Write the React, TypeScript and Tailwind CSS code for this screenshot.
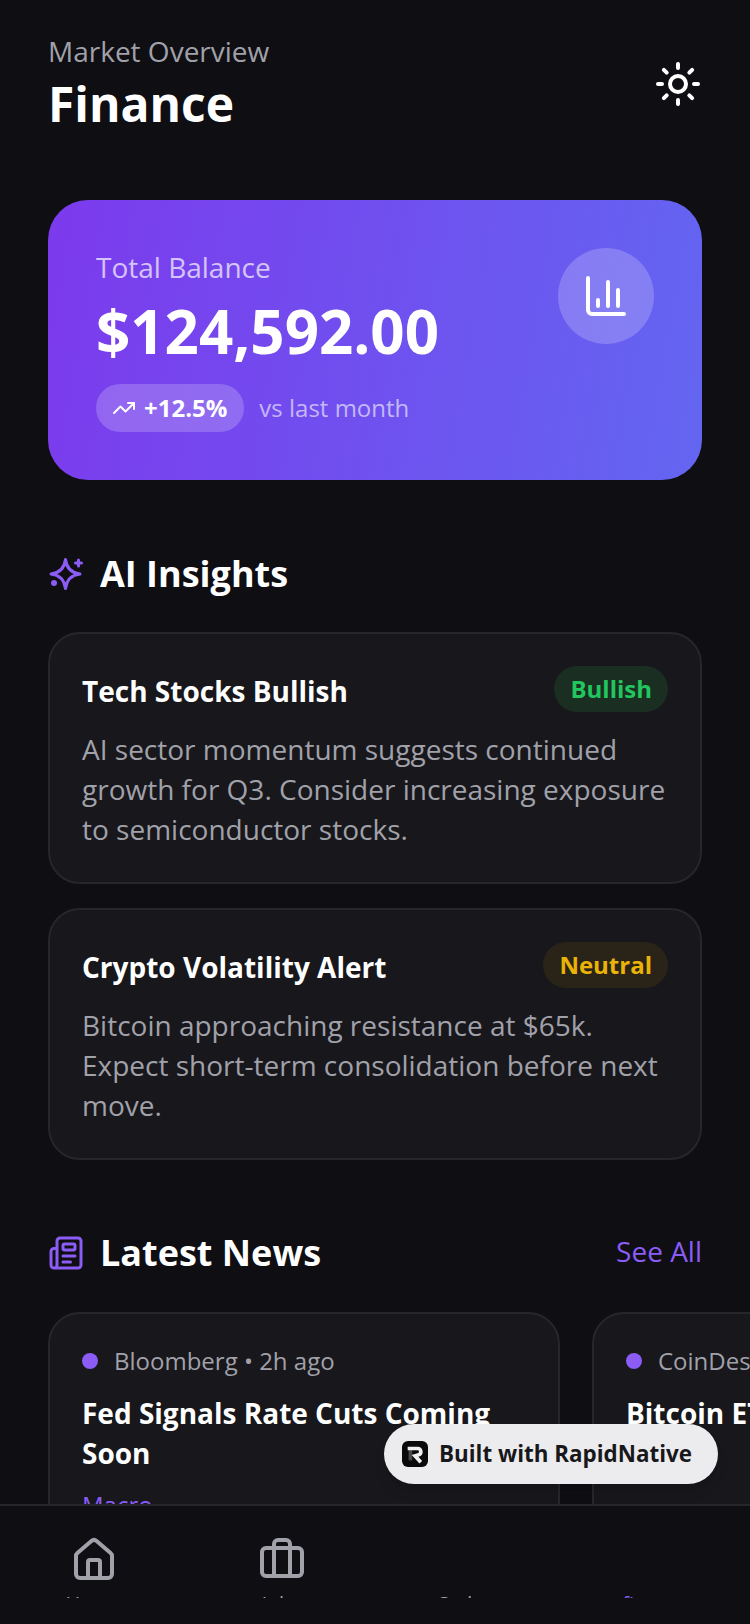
import { BarChart3, Briefcase, House, Newspaper, Sun, TrendingUp } from 'lucide-react';

const insights = [
  {
    title: 'Tech Stocks Bullish',
    body: 'AI sector momentum suggests continued growth for Q3. Consider increasing exposure to semiconductor stocks.',
    tag: 'Bullish',
    tagClass: 'bg-[#1a2e22] text-[#22c55e]',
  },
  {
    title: 'Crypto Volatility Alert',
    body: 'Bitcoin approaching resistance at $65k. Expect short-term consolidation before next move.',
    tag: 'Neutral',
    tagClass: 'bg-[#2a2418] text-[#eab308]',
  },
];

function InsightCard({ title, body, tag, tagClass }: (typeof insights)[number]) {
  return (
    <div className="rounded-[32px] border-2 border-[#27272a] bg-[#17171c] px-8 pt-8 pb-[33px]">
      <div className="flex items-start justify-between">
        <h3 className="mt-[6px] text-[28px] leading-[38px] font-bold text-white">{title}</h3>
        <span className={`rounded-full px-4 py-2 text-[24px] leading-[30px] font-bold ${tagClass}`}>{tag}</span>
      </div>
      <p className="mt-[17px] text-[28px] leading-[40px] text-[#a1a1aa]">{body}</p>
    </div>
  );
}

function NewsCard({ meta, title, tag }: { meta: string; title: string; tag: string }) {
  return (
    <div className="w-[512px] shrink-0 rounded-[32px] border-2 border-[#27272a] bg-[#17171c] px-8 pt-[31px] pb-8">
      <div className="flex items-center gap-4">
        <span className="size-4 rounded-full bg-[#8b5cf6]" />
        <span className="text-[24px] leading-[32px] text-[#a1a1aa] whitespace-nowrap">{meta}</span>
      </div>
      <h3 className="mt-4 text-[28px] leading-[40px] font-bold text-white">{title}</h3>
      <p className="mt-4 text-[24px] leading-[32px] text-[#8b5cf6]">{tag}</p>
    </div>
  );
}

function NavItem({ label, active, children }: { label: string; active?: boolean; children?: React.ReactNode }) {
  return (
    <div className="flex flex-1 flex-col items-center">
      <div className="h-[48px]">{children}</div>
      <div className="mt-[10px] h-[4px] overflow-hidden">
        <span className={`block text-[20px] leading-[20px] ${active ? 'text-[#8b5cf6]' : 'text-[#a1a1aa]'}`}>{label}</span>
      </div>
    </div>
  );
}

function SparkIcon() {
  return (
    <svg viewBox="0 0 36 36" className="size-9 text-[#8b5cf6]" fill="none" stroke="currentColor" strokeWidth="3" strokeLinecap="round" strokeLinejoin="round">
      <path d="M17.5 3.5C18.6 12.4 23.1 16.9 32 18 23.1 19.1 18.6 23.6 17.5 32.5 16.4 23.6 11.9 19.1 3 18 11.9 16.9 16.4 12.4 17.5 3.5Z" />
      <path d="M30.5 4v6M27.5 7h6" />
      <circle cx="6" cy="27" r="1.5" fill="currentColor" />
    </svg>
  );
}

export default function App() {
  return (
    <div className="relative flex h-[1624px] w-[750px] flex-col overflow-hidden bg-[#0e0e13] font-['Open_Sans',sans-serif]">
      <div className="min-h-0 flex-1 overflow-hidden px-12 pt-[31px]">
        <header className="flex items-center justify-between">
          <div>
            <p className="text-[28px] leading-[40px] text-[#a1a1aa]">Market Overview</p>
            <h1 className="mt-px text-[48px] leading-[64px] font-bold text-white">Finance</h1>
          </div>
          <Sun size={48} strokeWidth={2} className="text-white" />
        </header>

        <section className="mt-[64px] flex h-[280px] items-start justify-between rounded-[40px] bg-[linear-gradient(100deg,#7c3aed,#6366f1)] px-12 pt-[47px]">
          <div>
            <p className="text-[28px] leading-[40px] text-white/70">Total Balance</p>
            <p className="mt-2 text-[60px] leading-[72px] font-bold text-white">$124,592.00</p>
            <div className="mt-[17px] flex items-center gap-[15px]">
              <span className="flex h-12 items-center gap-2 rounded-full bg-white/20 pr-[17px] pl-4 text-[24px] font-bold text-white">
                <TrendingUp size={24} />
                +12.5%
              </span>
              <span className="text-[24px] text-white/60">vs last month</span>
            </div>
          </div>
          <div className="mt-px flex size-24 items-center justify-center rounded-full bg-white/20">
            <BarChart3 size={48} className="text-white" />
          </div>
        </section>

        <div className="mt-[70px] flex items-center gap-4">
          <SparkIcon />
          <h2 className="text-[36px] leading-[48px] font-bold text-white">AI Insights</h2>
        </div>

        <div className="mt-[34px] flex flex-col gap-6">
          {insights.map((item) => (
            <InsightCard key={item.title} {...item} />
          ))}
        </div>

        <div className="mt-[69px] flex items-center justify-between">
          <div className="flex items-center gap-4">
            <Newspaper size={36} className="text-[#8b5cf6]" />
            <h2 className="text-[36px] leading-[48px] font-bold text-white">Latest News</h2>
          </div>
          <span className="mb-1 text-[28px] text-[#8b5cf6]">See All</span>
        </div>

        <div className="mt-[35px] flex gap-8">
          <NewsCard meta="Bloomberg • 2h ago" title="Fed Signals Rate Cuts Coming Soon" tag="Macro" />
          <NewsCard meta="CoinDesk • 4h ago" title="Bitcoin ETF Inflows Hit Record" tag="Crypto" />
        </div>
      </div>

      <nav className="h-[120px] shrink-0 border-t-2 border-[#27272a] bg-[#0e0e13] pt-[30px]">
        <div className="flex">
          <NavItem label="Home">
            <House size={48} strokeWidth={2} className="text-[#a1a1aa]" />
          </NavItem>
          <NavItem label="Jobs">
            <Briefcase size={48} strokeWidth={2} className="ml-[2px] text-[#a1a1aa]" />
          </NavItem>
          <NavItem label="Orders" />
          <NavItem label="finance" active />
        </div>
      </nav>

      <div className="absolute top-[1424px] left-[384px] flex h-[60px] w-[334px] items-center gap-[11px] rounded-full bg-[#ececee] pl-[18px] shadow-lg">
        <span className="flex size-[26px] items-center justify-center rounded-[6px] bg-[#0a0a0a]">
          <svg viewBox="0 0 24 24" className="size-[22px]" fill="none">
            <path d="M7 6v13" stroke="#4a4a4a" strokeWidth="4" />
            <path d="M6 6h9a3.5 3.5 0 0 1 1 6.8L12 14l5 5.5" stroke="#f0f0f0" strokeWidth="4" strokeLinecap="square" />
          </svg>
        </span>
        <span className="text-[22.4px] font-bold text-[#18181b]">Built with RapidNative</span>
      </div>
    </div>
  );
}
